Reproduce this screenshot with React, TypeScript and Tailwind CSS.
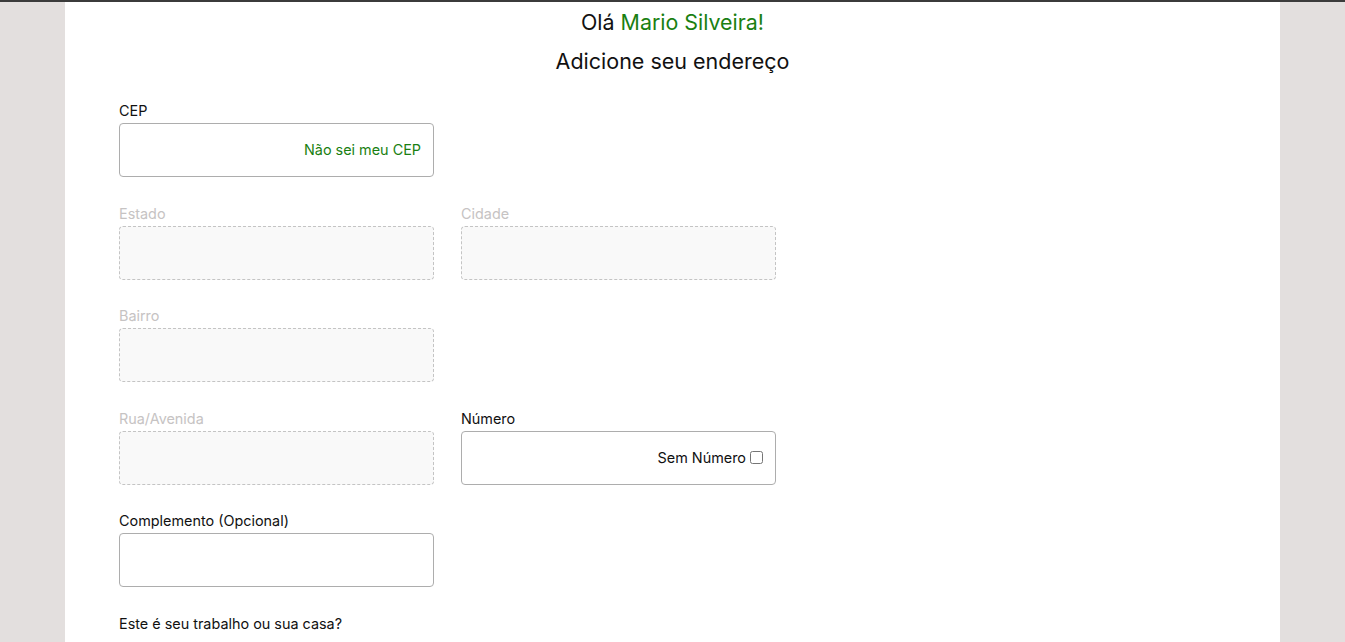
import React from "react";

const font = { fontFamily: "Inter, 'Noto Sans', sans-serif" };

function Field({
  label,
  disabled,
  right,
}: {
  label: string;
  disabled?: boolean;
  right?: React.ReactNode;
}) {
  return (
    <div className="flex flex-col w-[315px]">
      <label
        className={`text-[14.4px] leading-[17px] ${
          disabled ? "text-[#c6c3c3]" : "text-[#111]"
        }`}
      >
        {label}
      </label>
      <div
        className={`mt-[4px] h-[54px] rounded-[4px] flex items-center justify-end px-[12px] ${
          disabled
            ? "bg-[#f9f9f9] border border-dashed border-[#c4c4c4]"
            : "bg-white border border-[#adadad]"
        }`}
      >
        {right}
      </div>
    </div>
  );
}

export default function App() {
  return (
    <div className="min-h-screen bg-[#e3dfde]" style={font}>
      <div className="h-[2px] bg-[#3b3b3b]" />
      <div className="w-[1215px] mx-auto bg-white min-h-[640px] pt-[6px]">
        <div className="flex flex-col items-center">
          <h1 className="text-[21.4px] leading-[28px] text-[#111]">
            Olá <span className="text-[#1a7f12]">Mario Silveira!</span>
          </h1>
          <h2 className="mt-[11px] text-[21.5px] leading-[28px] text-[#111]">
            Adicione seu endereço
          </h2>
        </div>

        <div className="mt-[27px] pl-[54px] flex flex-col gap-[27.5px]">
          <Field
            label="CEP"
            right={
              <span className="text-[14.4px] text-[#1a7f12]">Não sei meu CEP</span>
            }
          />
          <div className="flex gap-[27px]">
            <Field label="Estado" disabled />
            <Field label="Cidade" disabled />
          </div>
          <Field label="Bairro" disabled />
          <div className="flex gap-[27px]">
            <Field label="Rua/Avenida" disabled />
            <Field
              label="Número"
              right={
                <span className="flex items-center gap-[4px] text-[14.4px] text-[#111]">
                  Sem Número
                  <input type="checkbox" className="w-[13px] h-[13px] m-0" />
                </span>
              }
            />
          </div>
          <Field label="Complemento (Opcional)" />
          <div className="flex flex-col">
            <span className="text-[14.4px] leading-[17px] text-[#111]">
              Este é seu trabalho ou sua casa?
            </span>
            <div className="mt-[8px] flex items-center gap-[6px] text-[14.4px] leading-[17px] text-[#111] pl-[17px]">
              <input type="radio" name="tipo" className="w-[13px] h-[13px] m-0" />
              <span>Endereço de residência</span>
            </div>
          </div>
        </div>
      </div>
    </div>
  );
}
